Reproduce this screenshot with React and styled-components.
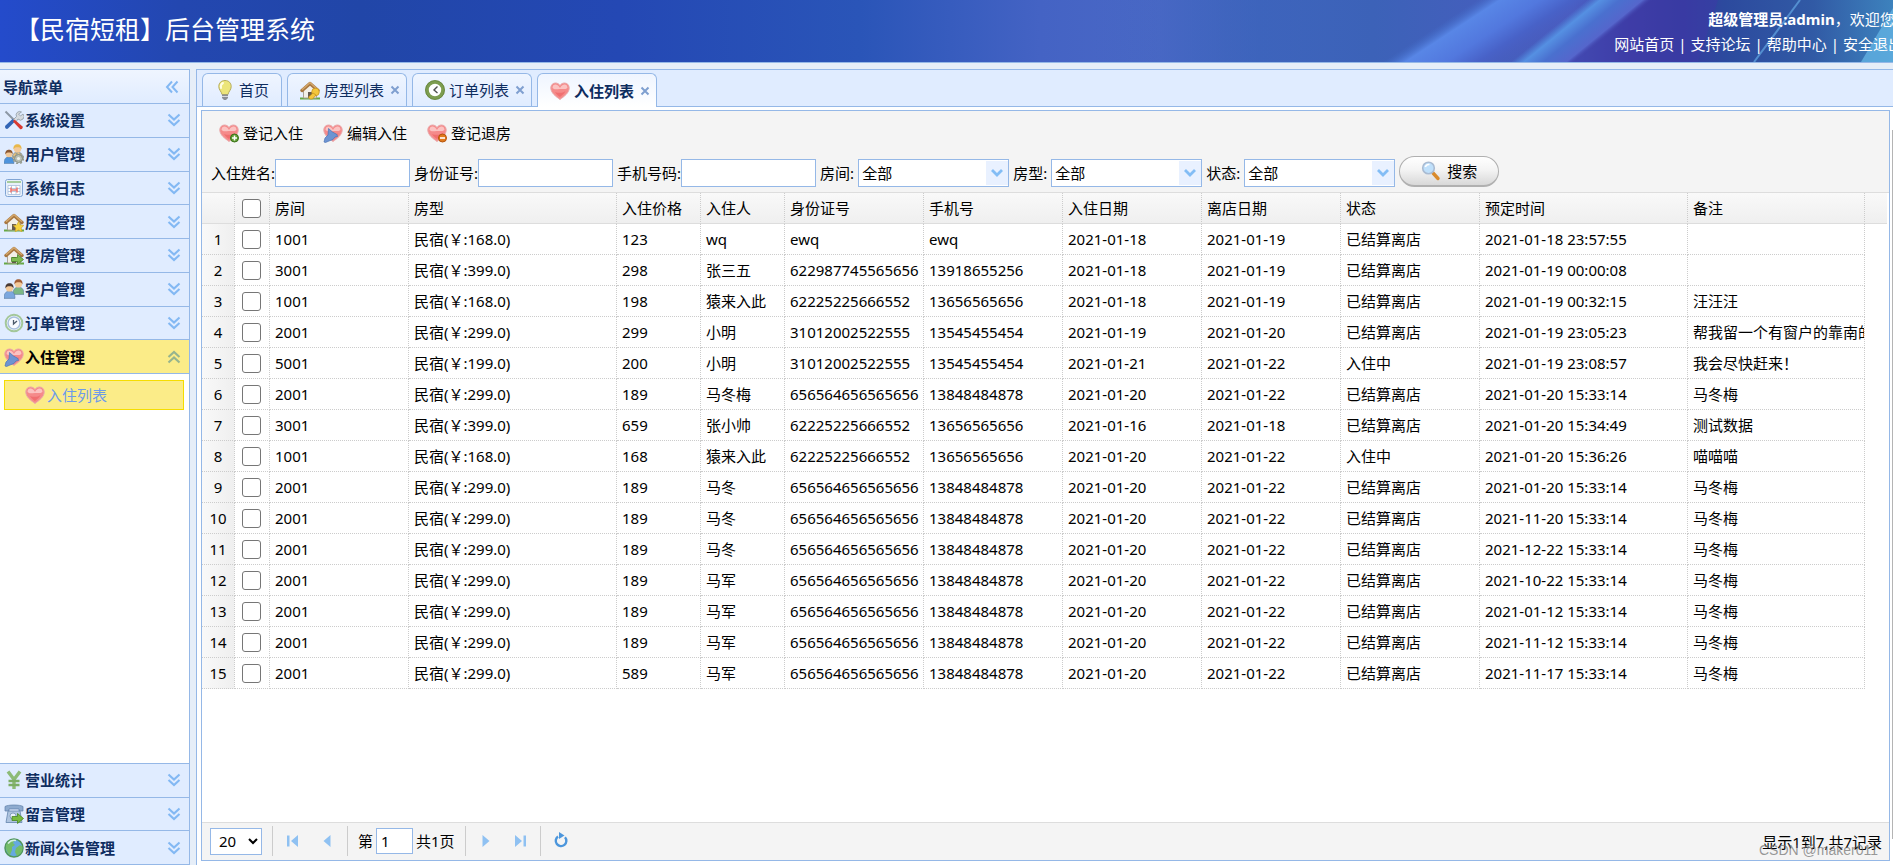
import React from "react";
import styled, { createGlobalStyle, css } from "styled-components";

const GlobalStyle = createGlobalStyle`
  * {
    box-sizing: border-box;
  }
  body {
    margin: 0;
    overflow: hidden;
    background: #e6eef8;
  }
  body, button, input, select {
    font-family: "Noto Sans", "Noto Sans CJK SC", sans-serif;
    font-size: 15px;
    line-height: 20px;
    color: #000;
  }
  a {
    color: inherit;
    text-decoration: none;
  }
  button {
    padding: 0;
    border: 0;
    background: none;
    cursor: pointer;
  }
`;

const Page = styled.div`
  height: 100vh;
  display: flex;
  flex-direction: column;
`;

/* ---------- header ---------- */

const Head = styled.header`
  position: relative;
  flex: none;
  height: 63px;
  display: flex;
  justify-content: space-between;
  align-items: center;
  overflow: hidden;
  border-bottom: 1px solid #95b8e7;
  background: linear-gradient(
    90deg,
    #244bcb 0,
    #2347b0 180px,
    #2146a8 360px,
    #2448b4 620px,
    #2a55b8 860px,
    #4463c4 1040px,
    #4a68c6 1160px,
    #3d64bd 1260px,
    #3f66c0 1400px
  );
  color: #fff;
`;
const HeadArt = styled.svg`
  position: absolute;
  top: 0;
  right: 0;
`;
const Title = styled.h1`
  position: relative;
  margin: 0;
  padding: 0 0 4px 15px;
  font-size: 25px;
  line-height: 36px;
  font-weight: normal;
`;
const Account = styled.div`
  position: relative;
  margin-right: -10px;
  padding-top: 2px;
  line-height: 25px;
  white-space: nowrap;
`;
const Welcome = styled.div`
  padding-left: 94px;
`;
const HeadLinks = styled.nav`
  display: flex;
  gap: 4px;
`;

/* ---------- sidebar ---------- */

const Body = styled.div`
  flex: 1;
  min-height: 0;
  padding-top: 6px;
  display: grid;
  grid-template-columns: 190px minmax(0, 1fr);
  column-gap: 6px;
`;
const Sidebar = styled.aside`
  display: flex;
  flex-direction: column;
  border: 1px solid #95b8e7;
  border-left: 0;
  border-bottom: 0;
  background: #fff;
`;
const SidebarTitle = styled.div`
  display: flex;
  align-items: center;
  justify-content: space-between;
  height: 34px;
  padding: 0 10px 0 3px;
  border-bottom: 1px solid #95b8e7;
  background: linear-gradient(#eff5ff, #e0ecff);
  color: #0e2d5f;
  font-weight: bold;
`;
const MenuGroup = styled.div`
  display: grid;
  grid-auto-rows: 1fr;
  height: ${(p) => (p.$bottom ? "102px" : "270px")};
  border-top: ${(p) => (p.$bottom ? "1px solid #95b8e7" : "0")};
`;
const MenuHead = styled.button`
  display: flex;
  align-items: center;
  gap: 1px;
  padding: 0 8px 0 4px;
  border-bottom: 1px solid #95b8e7;
  background: ${(p) => (p.$active ? "#fbec88" : "#e0ecff")};
  color: ${(p) => (p.$active ? "#000" : "#0e2d5f")};
  font-weight: bold;
`;
const MenuText = styled.span`
  flex: 1;
  text-align: left;
`;
const SubMenu = styled.div`
  flex: 1;
  padding: 6px 5px 6px 4px;
`;
const SubItem = styled.a`
  display: flex;
  align-items: center;
  gap: 2px;
  height: 30px;
  padding-left: 20px;
  border: 1px solid #f5dd00;
  background: #fbec88;
  color: #6e9bea;
`;

/* ---------- tabs ---------- */

const Center = styled.main`
  min-width: 0;
  display: flex;
  flex-direction: column;
  border-top: 1px solid #95b8e7;
  border-left: 1px solid #95b8e7;
  background: #fff;
`;
const TabBar = styled.div`
  display: flex;
  gap: 5px;
  flex: none;
  height: 37px;
  padding: 3px 0 0 5px;
  border-bottom: 1px solid #95b8e7;
  background: #e0ecff;
`;
const Tab = styled.div`
  display: flex;
  align-items: center;
  height: 33px;
  padding: 0 6px 0 12px;
  border: 1px solid #95b8e7;
  border-bottom: 0;
  border-radius: 6px 6px 0 0;
  background: linear-gradient(#eff5ff, #e0ecff);
  color: #0e2d5f;
  ${(p) =>
    p.$active &&
    css`
      height: 34px;
      background: linear-gradient(#eff5ff, #fff);
      font-weight: bold;
    `}
`;
const TabLabel = styled.button`
  display: flex;
  align-items: center;
  gap: 4px;
  color: inherit;
  font-weight: inherit;
  padding-right: 6px;
`;
const TabClose = styled.button`
  display: flex;
`;

/* ---------- grid panel ---------- */

const PanelRow = styled.div`
  flex: 1;
  min-height: 0;
  display: flex;
  justify-content: space-between;
  padding-top: 3px;
`;
const Panel = styled.section`
  flex: 1;
  min-width: 0;
  margin: 0 2px 4px 4px;
  display: flex;
  flex-direction: column;
  border: 1px solid #95b8e7;
`;
const ScrollEdge = styled.div`
  width: 1px;
  margin: 20px 0 26px;
  background: #b4b4b4;
`;
const Toolbar = styled.div`
  padding: 12px 9px 5px;
  border-bottom: 1px solid #ddd;
  background: #f4f4f4;
`;
const Actions = styled.div`
  display: flex;
  gap: 20px;
  padding-left: 8px;
`;
const Action = styled.button`
  display: flex;
  align-items: center;
  gap: 4px;
`;
const SearchRow = styled.form`
  display: flex;
  align-items: center;
  gap: 4px;
  margin-top: 13px;
`;
const Field = styled.label`
  display: flex;
  align-items: center;
  gap: ${(p) => p.$gap || 0}px;
  padding-top: 3px;
  white-space: nowrap;
`;
const TextBox = styled.input`
  width: 135px;
  height: 28px;
  padding: 0 4px;
  border: 1px solid #95b8e7;
  outline: none;
  background: #fff;
`;
const Combo = styled.span`
  position: relative;
  display: flex;
`;
const ComboArrow = styled.span`
  position: absolute;
  top: 2px;
  right: 1px;
  display: flex;
  align-items: center;
  justify-content: center;
  width: 22px;
  height: 24px;
  background: #e9f1ff;
  pointer-events: none;
`;
const ComboSelect = styled.select`
  width: 151px;
  height: 28px;
  padding: 0 3px;
  border: 1px solid #95b8e7;
  border-radius: 0;
  appearance: none;
  background: #fff;
`;
const SearchButton = styled.button`
  display: flex;
  align-items: center;
  justify-content: center;
  gap: 6px;
  width: 100px;
  height: 31px;
  border: 1px solid #b0b0b0;
  border-bottom-width: 2px;
  border-radius: 16px;
  background: linear-gradient(#fff, #f4f4f4 45%, #d8d8d8);
`;
const GridArea = styled.div`
  flex: 1;
  min-height: 0;
  overflow: hidden;
  padding-right: 2px;
  background: #fff;
`;
const Grid = styled.table`
  width: 100%;
  table-layout: fixed;
  border-collapse: separate;
  border-spacing: 0;
`;
const cell = css`
  height: 31px;
  padding: 0 0 0 5px;
  overflow: hidden;
  white-space: nowrap;
  text-align: left;
  font-weight: normal;
  border-right: 1px dotted #ccc;
`;
const Th = styled.th`
  ${cell}
  border-bottom: 1px solid #ddd;
  background: linear-gradient(#f9f9f9, #efefef);
  &:last-child {
    border-right: 0;
  }
`;
const Td = styled.td`
  ${cell}
  border-bottom: 1px dotted #ccc;
  &:last-child {
    border: 0;
  }
`;
const NumTd = styled(Td)`
  padding: 0;
  text-align: center;
  background: linear-gradient(90deg, #f9f9f9, #efefef);
`;
const CheckBox = styled.input`
  display: block;
  width: 19px;
  height: 19px;
  margin: 0 0 0 2px;
  appearance: none;
  border: 1px solid #767676;
  border-radius: 3px;
  background: #fff;
  &:checked {
    background: #0075ff;
  }
`;

/* ---------- pager ---------- */

const Pager = styled.footer`
  display: flex;
  align-items: center;
  height: 38px;
  padding: 0 7px 1px 8px;
  border-top: 1px solid #ddd;
  background: #f4f4f4;
`;
const PageSize = styled.select`
  width: 52px;
  height: 27px;
  padding: 0 2px 0 4px;
  border: 1px solid #95b8e7;
  background: #fff;
`;
const Divider = styled.span`
  width: 1px;
  height: 30px;
  margin: 0 10px;
  background: #ccc;
`;
const PagerButton = styled.button`
  display: flex;
  align-items: center;
  justify-content: center;
  width: 20px;
  height: 20px;
  & + & {
    margin-left: 14px;
  }
`;
const PageNumber = styled.label`
  display: flex;
  align-items: center;
  gap: 3px;
`;
const PageInput = styled(TextBox)`
  width: 37px;
  height: 26px;
`;
const PagerInfo = styled.div`
  position: relative;
  margin-left: auto;
  padding-top: 1px;
`;
const Watermark = styled.span`
  position: absolute;
  right: 4px;
  top: 9px;
  color: rgba(110, 110, 110, 0.7);
  font-family: "Liberation Sans", sans-serif;
  font-size: 14px;
  white-space: nowrap;
`;

/* ---------- icons ---------- */

const Svg = ({ w = 20, h = 20, children }) => (
  <svg width={w} height={h} viewBox={`0 0 ${w} ${h}`} fill="none" aria-hidden="true">
    {children}
  </svg>
);

const HeartShape = () => (
  <>
    <path
      d="M10 18.5C6 15.5 .8 12 .8 7 .8 3.8 3 2 5.500 2 7.500 2 9.200 3 10 4.600 10.800 3 12.500 2 14.500 2 17 2 19.200 3.800 19.200 7c0 5-5.200 8.500-9.200 11.500z"
      fill="#f58a8a"
      stroke="#e9a9ab"
    />
    <path
      d="M2.500 7C2.500 4.500 4 3.400 5.800 3.600 8 3.800 9 5.500 10 7c1-1.500 2-3.200 4.200-3.400 1.800-.2 3.300.9 3.300 3.400-2 1.500-4 1-7.500 1S4.500 9 2.500 7z"
      fill="#fbc3c2"
    />
    <path d="M5 11c2 3 3.500 4 5 5 2.500-2 4.500-3.500 5.500-6-2 2-7 2.500-10.500 1z" fill="#f06f70" />
  </>
);

const Hand = () => (
  <path
    d="M1 19l1-4 3-3 .5-6.500 4 3.500 4.500 2.500.5 2-2.500.5-2 2.500L6 18l-3.500 1.500z"
    fill="#6d94d2"
    stroke="#4b73b4"
    strokeWidth=".7"
  />
);

const HouseShape = () => (
  <>
    <path d="M0 18.500h20" stroke="#67a844" strokeWidth="2" />
    <path d="M3.500 9.500L10 4l6.500 5.500v8.500h-13z" fill="#f2efe8" stroke="#aaa297" />
    <path d="M8 12h4v6H8z" fill="#655b50" />
    <path d="M2 10.500L10 3.500l8 7" stroke="#a8763f" strokeWidth="3.400" strokeLinejoin="round" strokeLinecap="round" />
    <path d="M2 9.800L10 2.800l8 7" stroke="#d2a76c" strokeWidth="1.500" />
  </>
);

const Person = ({ x, y, hair, shirt, s = 1 }) => (
  <g transform={`translate(${x} ${y}) scale(${s})`}>
    <path d="M0 14c0-5 2-6.500 5-6.500s5 1.500 5 6.500z" fill={shirt} stroke="#56789c" strokeWidth=".5" />
    <circle cx="5" cy="4.500" r="3.300" fill="#f3c999" />
    <path d="M1.300 5C1 1.500 3 .3 5 .3S9 1.500 8.700 5C7.800 3 6.500 3 5 3S2.200 3.200 1.300 5z" fill={hair} />
  </g>
);

const icons = {
  tools: (
    <>
      <path d="M1.500 1.500l9 9" stroke="#8c98a5" strokeWidth="2" />
      <path
        d="M17.500 2a3.500 3.500 0 00-5 4.500L9 10l2.500 2.500L14 9a3.500 3.500 0 005-5L16.500 6 14.500 4z"
        fill="#d5dade"
        stroke="#8f9aa5"
        strokeWidth=".8"
      />
      <path d="M1.500 15.500L8.500 9l2.500 2.500-7 7C2.500 20 0 17.500 1.500 15.500z" fill="#3265b6" />
      <path d="M10.500 9.500l8 7c1 1.500-1 3.500-2.500 2.500l-7-7.500z" fill="#d83a32" />
    </>
  ),
  admins: (
    <>
      <Person x={8} y={0} hair="#e8b84c" shirt="#e4bf7d" s={1.1} />
      <Person x={0} y={5.500} hair="#8b5833" shirt="#4e94dd" />
      <circle cx="14.500" cy="14.500" r="4" fill="#b8bdb2" stroke="#878d80" />
      <circle cx="14.500" cy="14.500" r="5" stroke="#979d90" strokeWidth="1.500" strokeDasharray="2 2" />
      <circle cx="14.500" cy="14.500" r="1.600" fill="#eff1ec" />
    </>
  ),
  log: (
    <>
      <rect x="1.500" y="1.500" width="17" height="17" rx="2" fill="#e8f0fa" stroke="#7fa4d4" />
      <path d="M3 4h14" stroke="#8fc07c" strokeWidth="1.500" />
      <path
        d="M4 7.500h12v9H4zM4 10.500h12M4 13.500h12M7.500 7.500v9M12 7.500v9"
        stroke="#a8bedb"
        fill="#fff"
        strokeWidth=".8"
      />
      <path d="M7 9.500v5M13 9.500v5M7 12h6" stroke="#ee7a73" strokeWidth="1.600" />
    </>
  ),
  houseStar: (
    <>
      <HouseShape />
      <path
        d="M14.500 9.500l1.700 3.400 3.600.5-2.600 2.600.7 3.700-3.400-1.700-3.300 1.700.6-3.700-2.600-2.600 3.700-.5z"
        fill="#f6d33f"
        stroke="#caa021"
        strokeWidth=".6"
      />
    </>
  ),
  houseArrow: (
    <>
      <HouseShape />
      <path d="M7.500 12.500h6V9.500l6 5-6 5v-3h-6z" fill="#7fbb52" stroke="#4a8528" strokeWidth=".8" />
    </>
  ),
  houseKey: (
    <>
      <HouseShape />
      <circle cx="15.500" cy="12" r="3.800" fill="#f4c63c" stroke="#c18f18" strokeWidth=".7" />
      <path d="M13 13l-4.500 4 1 2h3l3.500-4z" fill="#f4c63c" stroke="#c18f18" strokeWidth=".7" />
    </>
  ),
  customers: (
    <>
      <Person x={9} y={0} hair="#a35f35" shirt="#7db884" s={1.1} />
      <Person x={0} y={4} hair="#4a3a33" shirt="#7ba7de" s={1.1} />
    </>
  ),
  clock: (
    <>
      <circle cx="10" cy="10" r="8.300" fill="#f8fbff" stroke="#a3c79a" strokeWidth="2" />
      <circle cx="10" cy="10" r="6" stroke="#a7bfde" strokeWidth="1.500" />
      <path d="M9.500 7v4l3.500-3" stroke="#4c5b6c" strokeWidth="1.300" />
    </>
  ),
  clockGreen: (
    <>
      <circle cx="10" cy="10" r="8" fill="#fff" stroke="#7d9d50" strokeWidth="3.600" />
      <circle cx="10" cy="10" r="9.500" stroke="#5b7c34" strokeWidth=".7" />
      <path d="M12.500 6.500L9 10l3.500 3" stroke="#4f4f4f" strokeWidth="1.400" />
    </>
  ),
  heart: <HeartShape />,
  heartHand: (
    <>
      <HeartShape />
      <Hand />
    </>
  ),
  heartAdd: (
    <>
      <HeartShape />
      <circle cx="15.500" cy="15" r="4" fill="#61a034" stroke="#397017" />
      <path d="M15.500 12.500v5M13 15h5" stroke="#fff" strokeWidth="1.500" />
    </>
  ),
  heartRemove: (
    <>
      <HeartShape />
      <circle cx="15.500" cy="15" r="4" fill="#e17a1b" stroke="#b4530c" />
      <path d="M13 15h5" stroke="#fff" strokeWidth="1.600" />
    </>
  ),
  bulb: (
    <>
      <path
        d="M10 .5C6 .5 3.800 3.300 3.800 6.500c0 3.500 2.700 5 3.200 8h6c.5-3 3.200-4.500 3.200-8C16.200 3.300 14 .5 10 .5z"
        fill="#ece57a"
        stroke="#b5ab5c"
      />
      <path d="M8 3C6 4 5.500 6 6 8" stroke="#fffde0" strokeWidth="2" strokeLinecap="round" />
      <path d="M7 14.500h6V18l-2 2H9l-2-2z" fill="#8b8f96" />
      <path d="M7 16.500h6" stroke="#d9dbde" />
    </>
  ),
  yen: (
    <>
      <path d="M4 1.500l6 8 6-8M10 9.500V19" stroke="#8dbb76" strokeWidth="3.400" />
      <path d="M4.500 11h11M4.500 15h11" stroke="#7cad65" strokeWidth="2.400" />
    </>
  ),
  phone: (
    <>
      <path d="M1 2.500C4 .5 16 .5 19 2.500V7h-4V5H5v2H1z" fill="#8eabcf" stroke="#5f7fa9" strokeWidth=".7" />
      <path d="M4 7h12l2 11.500H2z" fill="#aec4df" stroke="#6585ad" strokeWidth=".8" />
      <circle cx="9" cy="12" r="3" fill="#e9f1fa" stroke="#6585ad" strokeWidth=".7" />
      <path d="M8 12.500h5.500v-3l6 5-6 5v-3H8z" fill="#7abb3e" stroke="#488620" strokeWidth=".8" />
    </>
  ),
  globe: (
    <>
      <circle cx="10" cy="10" r="9" fill="#65a9df" stroke="#51975b" strokeWidth="1.500" />
      <path
        d="M2 7C4 3 8 1.500 11 2L9 5l2 2-3 2v3l-2 5C3 15 1.500 11 2 7zM12 10l4-3 2.500 1.500C19 13 16.500 16.500 13 18l-2-4z"
        fill="#74bd68"
      />
      <path d="M4 5.500C6 3 9 2 12 2.500" stroke="#d5efdf" strokeWidth="1.500" />
    </>
  ),
  search: (
    <>
      <path d="M12 12l5 5.500" stroke="#d98a2b" strokeWidth="3.400" strokeLinecap="round" />
      <circle cx="7.500" cy="7" r="5.800" fill="#bfe0fb" stroke="#a9bbd2" strokeWidth="1.600" />
      <path d="M4.300 6C5 4 6.500 3.300 8.500 3.500" stroke="#fff" strokeWidth="1.600" />
    </>
  ),
};

const Icon = ({ name }) => <Svg>{icons[name]}</Svg>;

const Chevrons = ({ up }) => (
  <Svg w={14} h={14}>
    <path
      d={up ? "M1.500 7L7 2l5.500 5M1.500 12.500l5.500-5 5.500 5" : "M1.500 1.500L7 6.500l5.500-5M1.500 7L7 12l5.500-5"}
      stroke={up ? "#96b48e" : "#83b8f3"}
      strokeWidth="2.100"
    />
  </Svg>
);

const arrows = {
  first: <path d="M4 4.500h2.500v11H4zM15 4v12l-7-6z" fill="#8fc1f2" />,
  prev: <path d="M13.500 4v12L6.500 10z" fill="#8fc1f2" />,
  next: <path d="M6.500 4v12l7-6z" fill="#8fc1f2" />,
  last: <path d="M13.500 4.500H16v11h-2.500zM5 4v12l7-6z" fill="#8fc1f2" />,
  refresh: (
    <>
      <path d="M7 5.500a5.300 5.300 0 107 .8" stroke="#4c96dc" strokeWidth="2.400" />
      <path d="M8 1l5.500 3.500L8 8z" fill="#4c96dc" />
    </>
  ),
};

/* ---------- data ---------- */

const topMenu = [
  ["tools", "系统设置"],
  ["admins", "用户管理"],
  ["log", "系统日志"],
  ["houseStar", "房型管理"],
  ["houseArrow", "客房管理"],
  ["customers", "客户管理"],
  ["clock", "订单管理"],
  ["heartHand", "入住管理"],
];
const bottomMenu = [
  ["yen", "营业统计"],
  ["phone", "留言管理"],
  ["globe", "新闻公告管理"],
];
const tabs = [
  { icon: "bulb", text: "首页", fixed: true },
  { icon: "houseKey", text: "房型列表" },
  { icon: "clockGreen", text: "订单列表" },
  { icon: "heart", text: "入住列表", active: true },
];
const columns = [
  ["房间", 139],
  ["房型", 208],
  ["入住价格", 84],
  ["入住人", 84],
  ["身份证号", 139],
  ["手机号", 139],
  ["入住日期", 139],
  ["离店日期", 139],
  ["状态", 139],
  ["预定时间", 208],
  ["备注", 177],
];
const left = "已结算离店";
const staying = "入住中";
const longId = "656564656565656";
const rows = [
  ["1001", "168.0", "123", "wq", "ewq", "ewq", "2021-01-18", "2021-01-19", left, "2021-01-18 23:57:55", ""],
  ["3001", "399.0", "298", "张三五", "622987745565656", "13918655256", "2021-01-18", "2021-01-19", left, "2021-01-19 00:00:08", ""],
  ["1001", "168.0", "198", "猿来入此", "62225225666552", "13656565656", "2021-01-18", "2021-01-19", left, "2021-01-19 00:32:15", "汪汪汪"],
  ["2001", "299.0", "299", "小明", "31012002522555", "13545455454", "2021-01-19", "2021-01-20", left, "2021-01-19 23:05:23", "帮我留一个有窗户的靠南的"],
  ["5001", "199.0", "200", "小明", "31012002522555", "13545455454", "2021-01-21", "2021-01-22", staying, "2021-01-19 23:08:57", "我会尽快赶来！"],
  ["2001", "299.0", "189", "马冬梅", longId, "13848484878", "2021-01-20", "2021-01-22", left, "2021-01-20 15:33:14", "马冬梅"],
  ["3001", "399.0", "659", "张小帅", "62225225666552", "13656565656", "2021-01-16", "2021-01-18", left, "2021-01-20 15:34:49", "测试数据"],
  ["1001", "168.0", "168", "猿来入此", "62225225666552", "13656565656", "2021-01-20", "2021-01-22", staying, "2021-01-20 15:36:26", "喵喵喵"],
  ["2001", "299.0", "189", "马冬", longId, "13848484878", "2021-01-20", "2021-01-22", left, "2021-01-20 15:33:14", "马冬梅"],
  ["2001", "299.0", "189", "马冬", longId, "13848484878", "2021-01-20", "2021-01-22", left, "2021-11-20 15:33:14", "马冬梅"],
  ["2001", "299.0", "189", "马冬", longId, "13848484878", "2021-01-20", "2021-01-22", left, "2021-12-22 15:33:14", "马冬梅"],
  ["2001", "299.0", "189", "马军", longId, "13848484878", "2021-01-20", "2021-01-22", left, "2021-10-22 15:33:14", "马冬梅"],
  ["2001", "299.0", "189", "马军", longId, "13848484878", "2021-01-20", "2021-01-22", left, "2021-01-12 15:33:14", "马冬梅"],
  ["2001", "299.0", "189", "马军", longId, "13848484878", "2021-01-20", "2021-01-22", left, "2021-11-12 15:33:14", "马冬梅"],
  ["2001", "299.0", "589", "马军", longId, "13848484878", "2021-01-20", "2021-01-22", left, "2021-11-17 15:33:14", "马冬梅"],
];

/* ---------- components ---------- */

function Header() {
  return (
    <Head>
      <HeadArt width="800" height="62" viewBox="0 0 800 62" aria-hidden="true">
        <defs>
          <linearGradient id="base">
            <stop offset="0" stopColor="#3f66c0" stopOpacity="0" />
            <stop offset=".35" stopColor="#3c62b8" />
            <stop offset=".6" stopColor="#4a5cc0" />
            <stop offset=".67" stopColor="#413fa8" />
            <stop offset=".74" stopColor="#353b9f" />
            <stop offset=".79" stopColor="#2c4a9e" />
            <stop offset=".9" stopColor="#315aa5" />
            <stop offset="1" stopColor="#3d82bd" />
          </linearGradient>
          <linearGradient id="ray" gradientUnits="userSpaceOnUse" x1="384" y1="0" x2="422" y2="58">
            <stop offset="0" stopColor="#4470cc" stopOpacity="0" />
            <stop offset=".18" stopColor="#5886e6" />
            <stop offset=".5" stopColor="#5278de" />
            <stop offset=".75" stopColor="#4862c8" />
            <stop offset="1" stopColor="#4a5cc0" stopOpacity="0" />
          </linearGradient>
          <linearGradient id="ray2" gradientUnits="userSpaceOnUse" x1="494" y1="0" x2="520" y2="32">
            <stop offset="0" stopColor="#4f8de0" stopOpacity="0" />
            <stop offset=".2" stopColor="#5590e2" />
            <stop offset=".5" stopColor="#4a70cf" />
            <stop offset=".85" stopColor="#5566cc" />
            <stop offset="1" stopColor="#3f3fa8" stopOpacity="0" />
          </linearGradient>
        </defs>
        <path d="M0 0h800v62H0z" fill="url(#base)" />
        <path d="M549 0h76l-20 62H470z" fill="#3c3aa6" opacity=".55" />
        <path d="M380 0h140l-80 62H280z" fill="url(#ray)" />
        <path d="M490 0h74l-74 62h-76z" fill="url(#ray2)" />
        <path d="M707 0l-46 62" stroke="#5c9ddc" strokeWidth="2" opacity=".8" />
        <path d="M800 8l-32 54h32z" fill="#62b2e2" opacity=".8" />
      </HeadArt>
      <Title>【民宿短租】后台管理系统</Title>
      <Account>
        <Welcome>
          <b>超级管理员:admin</b>，欢迎您
        </Welcome>
        <HeadLinks>
          <a href="#home">网站首页</a>|<a href="#forum">支持论坛</a>|<a href="#help">帮助中心</a>|
          <a href="#logout">安全退出</a>
        </HeadLinks>
      </Account>
    </Head>
  );
}

function Menu({ items, active, bottom }) {
  return (
    <MenuGroup $bottom={bottom}>
      {items.map(([icon, text]) => (
        <MenuHead key={text} type="button" $active={text === active}>
          <Icon name={icon} />
          <MenuText>{text}</MenuText>
          <Chevrons up={text === active} />
        </MenuHead>
      ))}
    </MenuGroup>
  );
}

function SelectField({ label }) {
  return (
    <Field $gap={4}>
      {label}:
      <Combo>
        <ComboSelect defaultValue="全部">
          <option>全部</option>
        </ComboSelect>
        <ComboArrow>
          <Svg w={14} h={10}>
            <path d="M2 2l5 5 5-5" stroke="#83bdf5" strokeWidth="2.800" />
          </Svg>
        </ComboArrow>
      </Combo>
    </Field>
  );
}

function DataGrid() {
  return (
    <Grid>
      <colgroup>
        <col width="33" />
        <col width="35" />
        {columns.map(([name, width]) => (
          <col key={name} width={width} />
        ))}
        <col />
      </colgroup>
      <thead>
        <tr>
          <Th />
          <Th>
            <CheckBox type="checkbox" aria-label="全选" />
          </Th>
          {columns.map(([name]) => (
            <Th key={name}>{name}</Th>
          ))}
          <Th />
        </tr>
      </thead>
      <tbody>
        {rows.map((row, i) => (
          <tr key={i}>
            <NumTd>{i + 1}</NumTd>
            <Td>
              <CheckBox type="checkbox" aria-label={`选择 ${i + 1}`} />
            </Td>
            {row.map((value, j) => (
              <Td key={j}>{j === 1 ? `民宿(￥:${value})` : value}</Td>
            ))}
            <Td />
          </tr>
        ))}
      </tbody>
    </Grid>
  );
}

function PageBar() {
  return (
    <Pager>
      <PageSize defaultValue="20" aria-label="每页条数">
        <option>20</option>
      </PageSize>
      <Divider />
      <PagerButton type="button" aria-label="首页">
        <Svg>{arrows.first}</Svg>
      </PagerButton>
      <PagerButton type="button" aria-label="上一页">
        <Svg>{arrows.prev}</Svg>
      </PagerButton>
      <Divider />
      <PageNumber>
        第
        <PageInput defaultValue="1" />
        共1页
      </PageNumber>
      <Divider />
      <PagerButton type="button" aria-label="下一页">
        <Svg>{arrows.next}</Svg>
      </PagerButton>
      <PagerButton type="button" aria-label="末页">
        <Svg>{arrows.last}</Svg>
      </PagerButton>
      <Divider />
      <PagerButton type="button" aria-label="刷新">
        <Svg>{arrows.refresh}</Svg>
      </PagerButton>
      <PagerInfo>
        显示1到7,共7记录
        <Watermark>CSDN @maker011</Watermark>
      </PagerInfo>
    </Pager>
  );
}

function App() {
  return (
    <Page>
      <GlobalStyle />
      <Header />
      <Body>
        <Sidebar>
          <SidebarTitle>
            导航菜单
            <Svg w={14} h={14}>
              <path d="M7 1.500L2 7l5 5.500M12.500 1.500l-5 5.500 5 5.500" stroke="#83b8f3" strokeWidth="2" />
            </Svg>
          </SidebarTitle>
          <Menu items={topMenu} active="入住管理" />
          <SubMenu>
            <SubItem href="#checkin">
              <Icon name="heart" />
              入住列表
            </SubItem>
          </SubMenu>
          <Menu items={bottomMenu} bottom />
        </Sidebar>
        <Center>
          <TabBar>
            {tabs.map((tab) => (
              <Tab key={tab.text} $active={tab.active}>
                <TabLabel type="button">
                  <Icon name={tab.icon} />
                  {tab.text}
                </TabLabel>
                {!tab.fixed && (
                  <TabClose type="button" aria-label="关闭">
                    <Svg w={10} h={10}>
                      <path d="M1.500 1.500l7 7M8.500 1.500l-7 7" stroke="#7f9fd0" strokeWidth="2" />
                    </Svg>
                  </TabClose>
                )}
              </Tab>
            ))}
          </TabBar>
          <PanelRow>
            <Panel>
              <Toolbar>
                <Actions>
                  <Action type="button">
                    <Icon name="heartAdd" />
                    登记入住
                  </Action>
                  <Action type="button">
                    <Icon name="heartHand" />
                    编辑入住
                  </Action>
                  <Action type="button">
                    <Icon name="heartRemove" />
                    登记退房
                  </Action>
                </Actions>
                <SearchRow>
                  <Field>
                    入住姓名:
                    <TextBox />
                  </Field>
                  <Field>
                    身份证号:
                    <TextBox />
                  </Field>
                  <Field>
                    手机号码:
                    <TextBox />
                  </Field>
                  <SelectField label="房间" />
                  <SelectField label="房型" />
                  <SelectField label="状态" />
                  <SearchButton type="button">
                    <Icon name="search" />
                    搜索
                  </SearchButton>
                </SearchRow>
              </Toolbar>
              <GridArea>
                <DataGrid />
              </GridArea>
              <PageBar />
            </Panel>
            <ScrollEdge />
          </PanelRow>
        </Center>
      </Body>
    </Page>
  );
}

export default App;
